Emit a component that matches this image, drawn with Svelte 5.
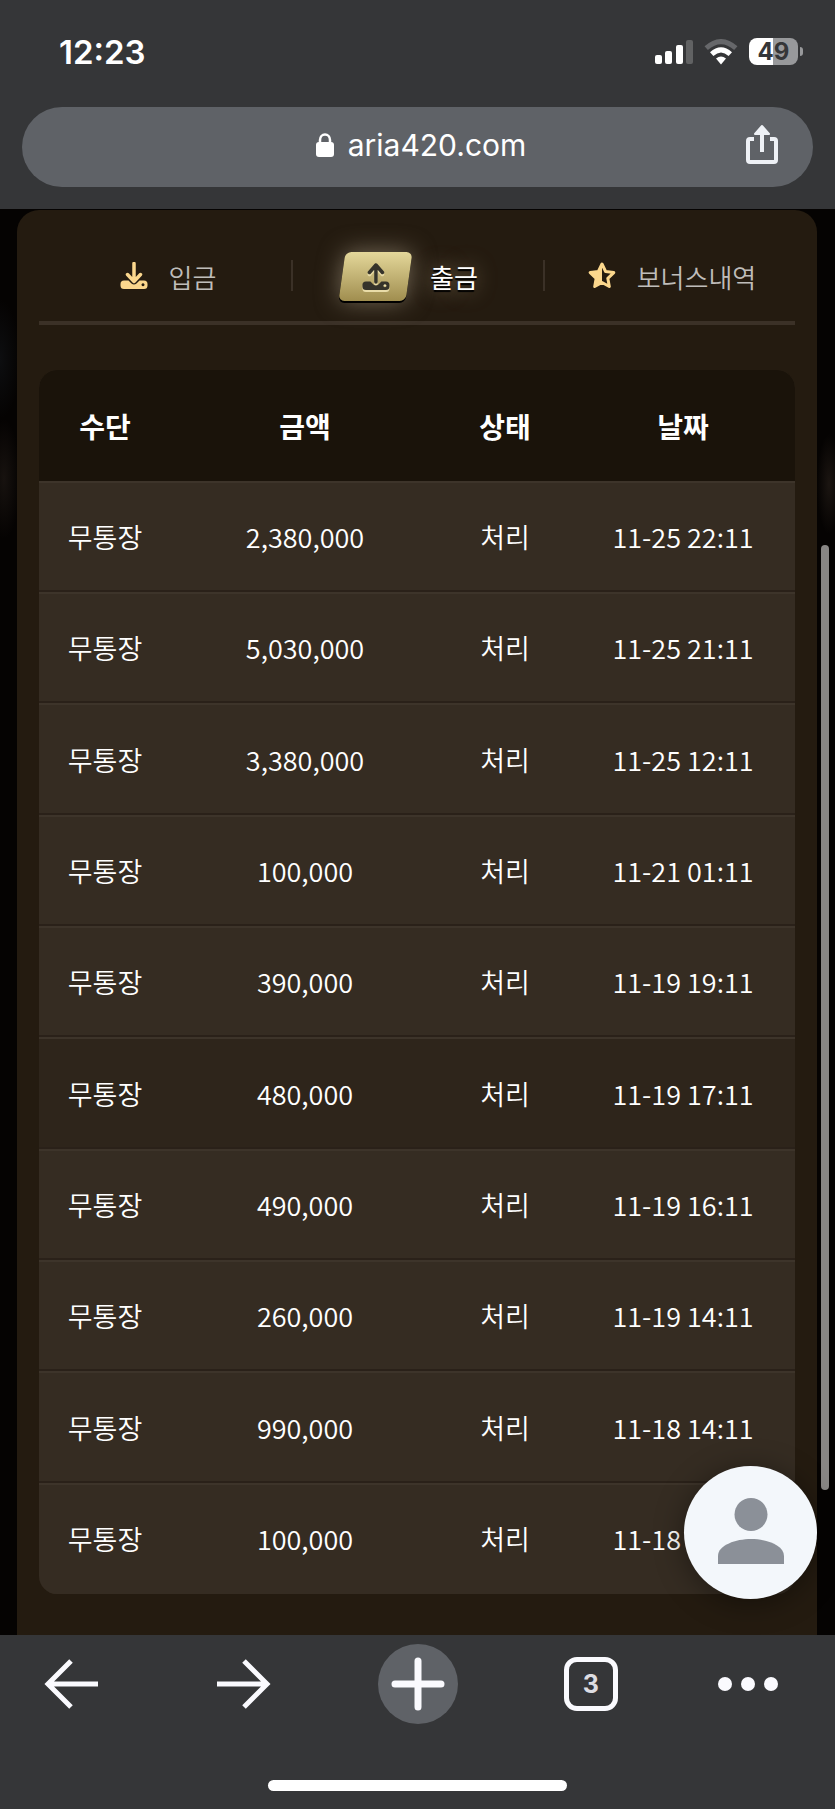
<script>
  let activeTab = 'withdraw';

  const tabs = [
    { id: 'deposit', label: '입금' },
    { id: 'withdraw', label: '출금' },
    { id: 'bonus', label: '보너스내역' }
  ];

  const rows = [
    { amount: '2,380,000', date: '11-25 22:11' },
    { amount: '5,030,000', date: '11-25 21:11' },
    { amount: '3,380,000', date: '11-25 12:11' },
    { amount: '100,000', date: '11-21 01:11' },
    { amount: '390,000', date: '11-19 19:11' },
    { amount: '480,000', date: '11-19 17:11', pressed: true },
    { amount: '490,000', date: '11-19 16:11' },
    { amount: '260,000', date: '11-19 14:11' },
    { amount: '990,000', date: '11-18 14:11' },
    { amount: '100,000', date: '11-18 14:11' }
  ];
</script>

<div class="phone">
  <header class="chrome">
    <div class="status">
      <time>12:23</time>
      <div class="signals">
        <svg width="38" height="24" viewBox="0 0 38 24" fill="#fff" aria-hidden="true">
          <rect x="0" y="15" width="7" height="9" rx="2" />
          <rect x="10" y="11" width="7" height="13" rx="2" />
          <rect x="21" y="5" width="7" height="19" rx="2" />
          <rect x="31" y="0" width="7" height="24" rx="2" opacity=".22" />
        </svg>
        <svg width="34" height="26" viewBox="0 0 34 26" fill="none" aria-hidden="true">
          <path d="M2.200 9.200Q17-4 31.800 9.200" stroke="#66676a" stroke-width="5" />
          <path d="M7.700 15.200Q17 6.600 26.300 15.200" stroke="#fff" stroke-width="5" />
          <path d="M12 19.500Q17 15.500 22 19.500L17 25.500Z" fill="#fff" />
        </svg>
        <div class="battery"><span>49</span></div>
      </div>
    </div>

    <div class="address">
      <svg class="lock" width="20" height="24" viewBox="0 0 20 24" aria-hidden="true">
        <path d="M5 11V7a5 5.500 0 0 1 10 0v4" fill="none" stroke="#fff" stroke-width="2.500" />
        <rect x="1" y="9" width="18" height="15" rx="3" fill="#fff" />
      </svg>
      <span>aria420.com</span>
      <button class="share" aria-label="Share">
        <svg width="34" height="42" viewBox="0 0 34 42" fill="none" stroke="#eef1f6" stroke-width="4">
          <path d="M9 16H5q-2 0-2 2v19q0 2 2 2h24q2 0 2-2V18q0-2-2-2h-4" />
          <path d="M17 29V4" />
          <path d="M10 11l7-8 7 8z" fill="#eef1f6" stroke-width="2" stroke-linejoin="round" />
        </svg>
      </button>
    </div>
  </header>

  <main>
    <section class="panel">
      <nav class="tabs">
        {#each tabs as tab}
          <button class="tab" class:active={tab.id === activeTab} on:click={() => (activeTab = tab.id)}>
            <span class="tab-icon">
              {#if tab.id === 'bonus'}
                <svg width="28" height="28" viewBox="0 0 28 28">
                  <path d="M14 2l3.600 7.500 8.200 1.100-6 5.700 1.500 8.200L14 20.500l-7.300 4 1.500-8.200-6-5.700 8.200-1.100z" fill="none" stroke="currentColor" stroke-width="3" stroke-linejoin="round" />
                  <path d="M14 2v18.500l-7.300 4 1.500-8.200-6-5.700 8.200-1.100z" fill="currentColor" />
                </svg>
              {:else}
                <svg width="28" height="28" viewBox="0 0 28 28">
                  <path d="M4 18.500h4.500l3 3q2.500 2 5 0l3-3H24a3.500 3.500 0 0 1 3.500 3.500v1.500A3.500 3.500 0 0 1 24 27H4a3.500 3.500 0 0 1-3.500-3.500V22A3.500 3.500 0 0 1 4 18.500zm19 2.700a1.500 1.500 0 1 0 .01 0z" fill="currentColor" fill-rule="evenodd" />
                  <path d={tab.id === 'deposit' ? 'M14 1.500v18M7.500 12.500l6.500 7 6.500-7' : 'M14 2v17M7.500 9.500L14 2l6.500 7.500'} fill="none" stroke="currentColor" stroke-width="3.500" stroke-linecap="round" stroke-linejoin="round" />
                </svg>
              {/if}
            </span>
            <span class="tab-label">{tab.label}</span>
          </button>
        {/each}
      </nav>

      <table>
        <thead>
          <tr>
            <th class="narrow">수단</th>
            <th class="amount">금액</th>
            <th class="narrow">상태</th>
            <th>날짜</th>
          </tr>
        </thead>
        <tbody>
          {#each rows as row}
            <tr class:pressed={row.pressed}>
              <td>무통장</td>
              <td>{row.amount}</td>
              <td>처리</td>
              <td>{row.date}</td>
            </tr>
          {/each}
        </tbody>
      </table>
    </section>

    <div class="scrollbar"></div>
    <button class="profile" aria-label="Profile">
      <svg width="66" height="66" viewBox="0 0 66 66" fill="#8b9098">
        <circle cx="33" cy="16.500" r="16.500" />
        <path d="M0 66V58C0 47 18 41 33 41s33 6 33 17v8z" />
      </svg>
    </button>
  </main>

  <footer>
    <nav class="toolbar">
      <button aria-label="Back">
        <svg width="54" height="50" viewBox="0 0 54 50" fill="none" stroke="#fafafe" stroke-width="5">
          <path d="M54 25H4M27 2L4 25l23 23" />
        </svg>
      </button>
      <button aria-label="Forward">
        <svg width="54" height="50" viewBox="0 0 54 50" fill="none" stroke="#fafafe" stroke-width="5">
          <path d="M0 25h50M27 2l23 23-23 23" />
        </svg>
      </button>
      <button class="new-tab" aria-label="New tab">
        <svg width="54" height="54" viewBox="0 0 54 54" fill="none" stroke="#fafafe" stroke-width="7" stroke-linecap="round">
          <path d="M27 4v46M4 27h46" />
        </svg>
      </button>
      <button><span class="tab-count">3</span></button>
      <button class="more" aria-label="More">
        <svg width="60" height="14" viewBox="0 0 60 14" fill="#fafafe">
          <circle cx="7" cy="7" r="7" />
          <circle cx="30" cy="7" r="7" />
          <circle cx="53" cy="7" r="7" />
        </svg>
      </button>
    </nav>
    <div class="home-indicator"></div>
  </footer>
</div>

<style>
  :global(body) {
    background: #353638;
  }

  .phone {
    color: #fff;
    font-family: "Noto Sans CJK KR", sans-serif;
  }

  button {
    padding: 0;
    border: none;
    background: none;
    color: inherit;
    font: inherit;
    cursor: pointer;
  }

  svg {
    display: block;
  }

  .chrome {
    padding: 32px 22px 22px;
    background: #353638;
    font-family: Inter, sans-serif;
  }

  .status {
    display: flex;
    justify-content: space-between;
    align-items: center;
    height: 39px;
    padding: 0 10px 0 37px;
    margin-bottom: 36px;
  }

  time {
    font-size: 33px;
    font-weight: 600;
  }

  .signals {
    display: flex;
    align-items: center;
    gap: 11px;
  }

  .battery {
    position: relative;
    width: 49px;
    margin-right: 5px;
    border-radius: 8px;
    background: linear-gradient(90deg, #fff 49%, #98999b 49%);
    color: #353638;
    font-size: 24px;
    font-weight: 700;
    line-height: 27px;
    text-align: center;
  }

  .battery::after {
    content: "";
    position: absolute;
    top: 9px;
    right: -5px;
    width: 3px;
    height: 9px;
    border-radius: 0 4px 4px 0;
    background: #98999b;
  }

  .address {
    position: relative;
    display: flex;
    justify-content: center;
    align-items: center;
    gap: 13px;
    box-sizing: border-box;
    height: 80px;
    padding: 0 0 4px 6px;
    border-radius: 40px;
    background: #5f6267;
    font-size: 30px;
  }

  .share {
    position: absolute;
    top: 16px;
    right: 34px;
  }

  main {
    position: relative;
    padding: 1px 18px 0 17px;
    background:
      radial-gradient(ellipse 16px 60px at 4px 270px, #17120f, transparent),
      radial-gradient(ellipse 20px 60px at 0 150px, #0d0e10, transparent),
      radial-gradient(ellipse 12px 50px at 829px 275px, #1b1511, transparent),
      #050302;
  }

  .panel {
    padding: 32px 22px 41px;
    border-radius: 22px 22px 0 0;
    background: #241b10;
  }

  .tabs {
    display: grid;
    grid-template-columns: repeat(3, 1fr);
    height: 79px;
    margin-bottom: 45px;
    border-bottom: 4px solid #3b3127;
  }

  .tab {
    position: relative;
    display: flex;
    justify-content: center;
    align-items: center;
    gap: 21px;
    height: 68px;
    padding-left: 6px;
    color: #bfbdba;
    font-size: 26px;
    font-weight: 350;
  }

  .tab + .tab::before {
    content: "";
    position: absolute;
    top: 18px;
    left: 0;
    width: 2px;
    height: 31px;
    background: #3b3127;
  }

  .tab-icon {
    color: #fbd78d;
  }

  .active {
    padding-right: 20px;
    color: #fff;
    font-weight: 400;
    text-shadow: 0 2px 1px #000, 0 0 20px #8c7c60;
  }

  .active .tab-icon {
    display: grid;
    place-items: center;
    width: 67px;
    height: 49px;
    border-radius: 6px;
    background: linear-gradient(#e4d79a, #a08e4f);
    box-shadow: 0 2px 0 #000, 0 0 24px #776c5a;
    color: #35332a;
    transform: skewX(-8deg);
  }

  .active svg {
    transform: skewX(8deg);
    filter: drop-shadow(0 2px 0 #e9dca8);
  }

  table {
    width: 100%;
    border-spacing: 0;
    border-radius: 18px;
    overflow: hidden;
    table-layout: fixed;
    background: #352c22;
    font-size: 27px;
    text-align: center;
  }

  th,
  td {
    box-sizing: border-box;
    height: 111px;
    padding: 0;
  }

  th {
    background: #1a130a;
    font-size: 28px;
    font-weight: 700;
  }

  td {
    border-top: 2px solid #3d342a;
    border-bottom: 2px solid #2a2119;
    font-weight: 350;
  }

  tr:nth-child(3n) td {
    height: 112px;
  }

  tr:last-child td {
    border-bottom-color: #352c22;
  }

  .narrow {
    width: 132px;
  }

  .amount {
    width: 268px;
  }

  .pressed {
    background: #2e251b;
  }

  .scrollbar {
    position: absolute;
    top: 336px;
    right: 6px;
    bottom: 145px;
    width: 8px;
    border-radius: 4px;
    background: #888684;
  }

  .profile {
    position: absolute;
    right: 18px;
    bottom: 36px;
    display: grid;
    place-items: center;
    width: 133px;
    height: 133px;
    padding-bottom: 4px;
    border-radius: 50%;
    background: #f3f7fb;
    box-shadow: 0 4px 30px rgba(0, 0, 0, 0.4);
  }

  footer {
    padding: 9px 0 18px;
    background: #353638;
    font-family: Inter, sans-serif;
  }

  .toolbar {
    display: grid;
    grid-template-columns: 142px 1fr 142px 1fr 142px;
    place-items: center;
    height: 80px;
    margin-bottom: 56px;
  }

  .new-tab {
    display: grid;
    place-items: center;
    width: 80px;
    height: 80px;
    border-radius: 50%;
    background: #5f6267;
  }

  .tab-count {
    display: block;
    box-sizing: border-box;
    width: 54px;
    height: 54px;
    border: 5px solid #fafafe;
    border-radius: 13px;
    color: #dddde2;
    font-size: 25px;
    font-weight: 700;
    line-height: 44px;
  }

  .more {
    padding-right: 32px;
  }

  .home-indicator {
    width: 299px;
    height: 11px;
    margin: 0 auto;
    border-radius: 6px;
    background: #fff;
  }
</style>
